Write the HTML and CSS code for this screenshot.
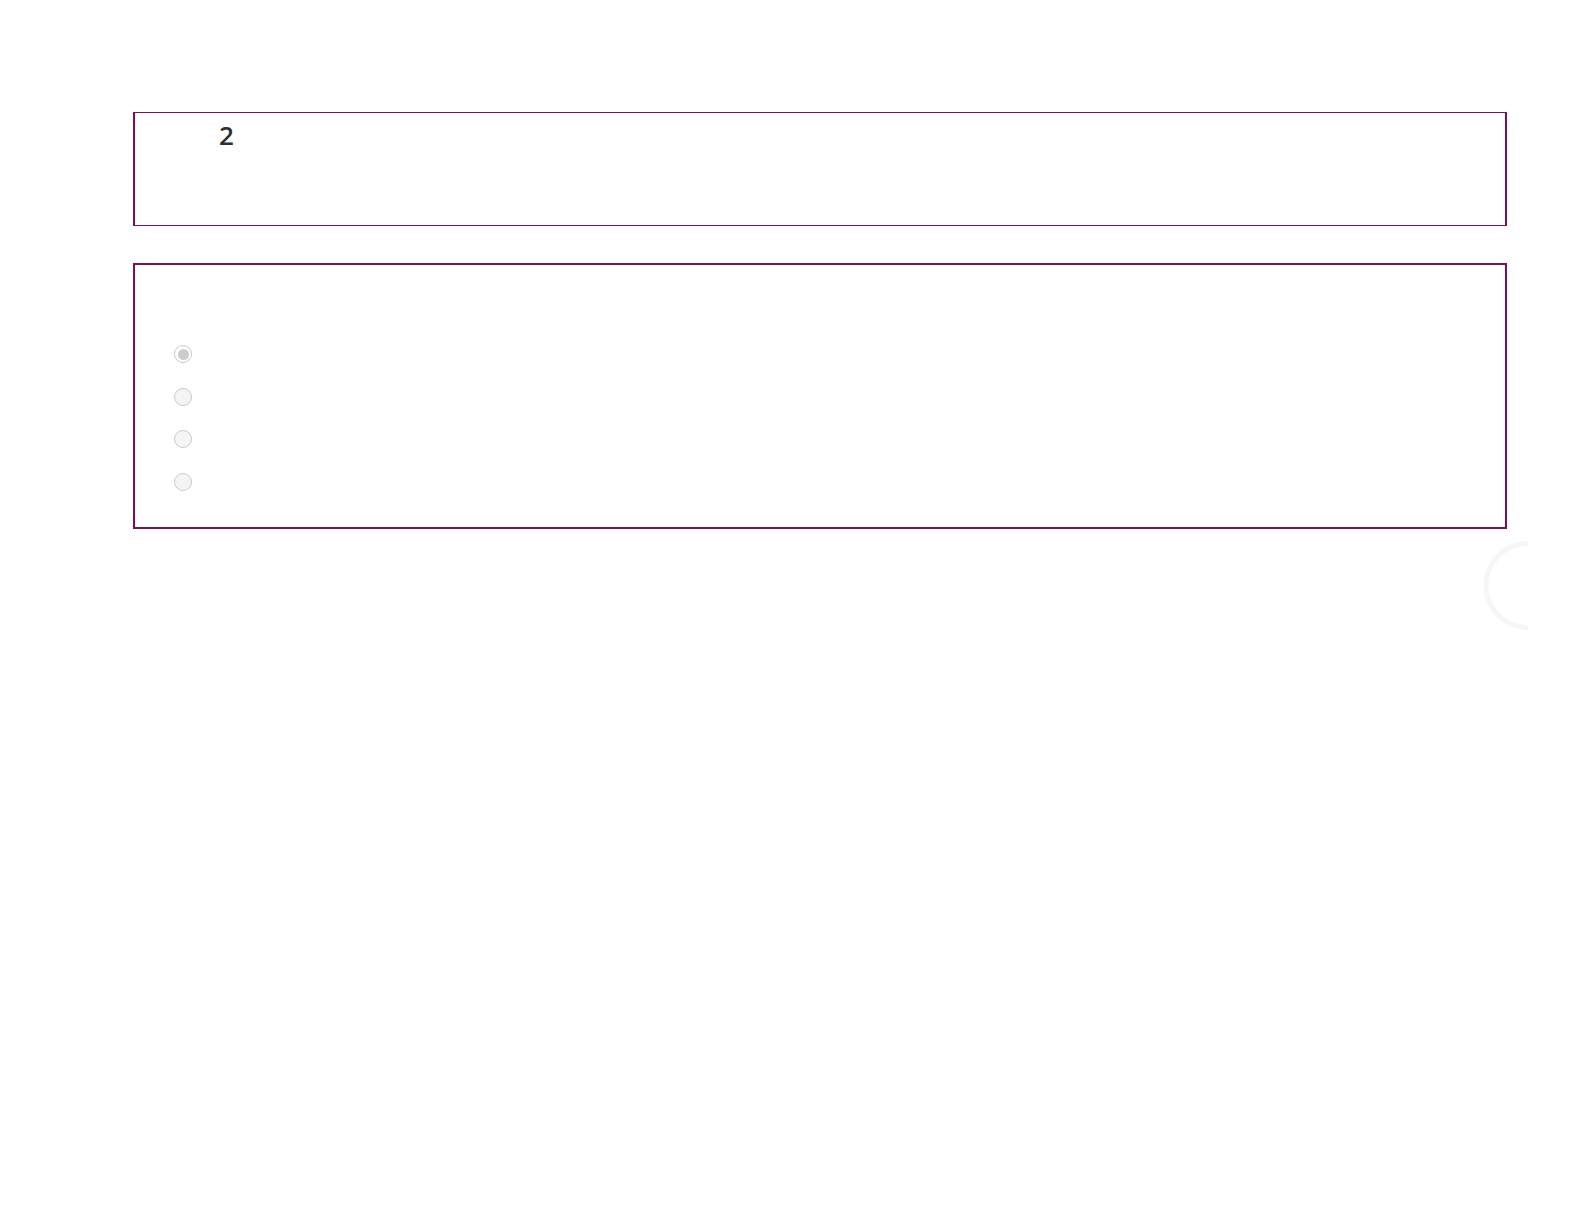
FILE: index.html
```html
<!DOCTYPE html>
<html lang="en">
<head>
<meta charset="utf-8">
<title>Question</title>
<link rel="stylesheet" href="styles.css">
</head>
<body>
<main class="page">
  <section class="stem">
    <span class="stem-number">2</span>
  </section>
  <section class="answers">
    <ul class="options">
      <li class="option"><span class="radio radio-checked"></span></li>
      <li class="option"><span class="radio"></span></li>
      <li class="option"><span class="radio"></span></li>
      <li class="option"><span class="radio"></span></li>
    </ul>
  </section>
</main>
<div class="spinner">
  <svg width="60" height="100" viewBox="0 0 60 100">
    <path d="M44 2.5 A42 42 0 0 0 44 86.5" fill="none" stroke="#f6f6f6" stroke-width="5"/>
  </svg>
</div>
</body>
</html>
```
FILE: styles.css
```css
html, body {
  margin: 0;
  padding: 0;
  background: #ffffff;
  font-family: "Open Sans", "Liberation Sans", sans-serif;
  color: #333333;
}

.page {
  display: flex;
  flex-direction: column;
  gap: 37px;
  padding: 112px 0 0 133px;
  width: 1375px;
}

.stem {
  box-sizing: border-box;
  width: 1374px;
  height: 114px;
  border-style: solid;
  border-color: #7c1052;
  border-width: 1px 2px;
  padding: 5px 0 0 84px;
}

.stem-number {
  font-size: 26px;
  line-height: 35px;
  font-weight: 600;
  color: #2e2e2e;
}

.answers {
  box-sizing: border-box;
  width: 1374px;
  height: 266px;
  border: 2px solid #7c1052;
  padding: 80px 0 0 39px;
}

.options {
  list-style: none;
  margin: 0;
  padding: 0;
  display: flex;
  flex-direction: column;
  gap: 24.67px;
}

.option {
  display: flex;
  align-items: center;
  height: 18px;
}

.radio {
  box-sizing: border-box;
  width: 18px;
  height: 18px;
  border-radius: 50%;
  border: 1.5px solid #cacaca;
  background: #f4f4f4;
  display: flex;
  align-items: center;
  justify-content: center;
}

.radio-checked {
  background: #ffffff;
}

.radio-checked::after {
  content: "";
  width: 11px;
  height: 11px;
  border-radius: 50%;
  background: #cccccc;
}

.spinner {
  position: absolute;
  left: 1484px;
  top: 541px;
  width: 44px;
  height: 92px;
  overflow: hidden;
}

.spinner svg {
  display: block;
}
```
